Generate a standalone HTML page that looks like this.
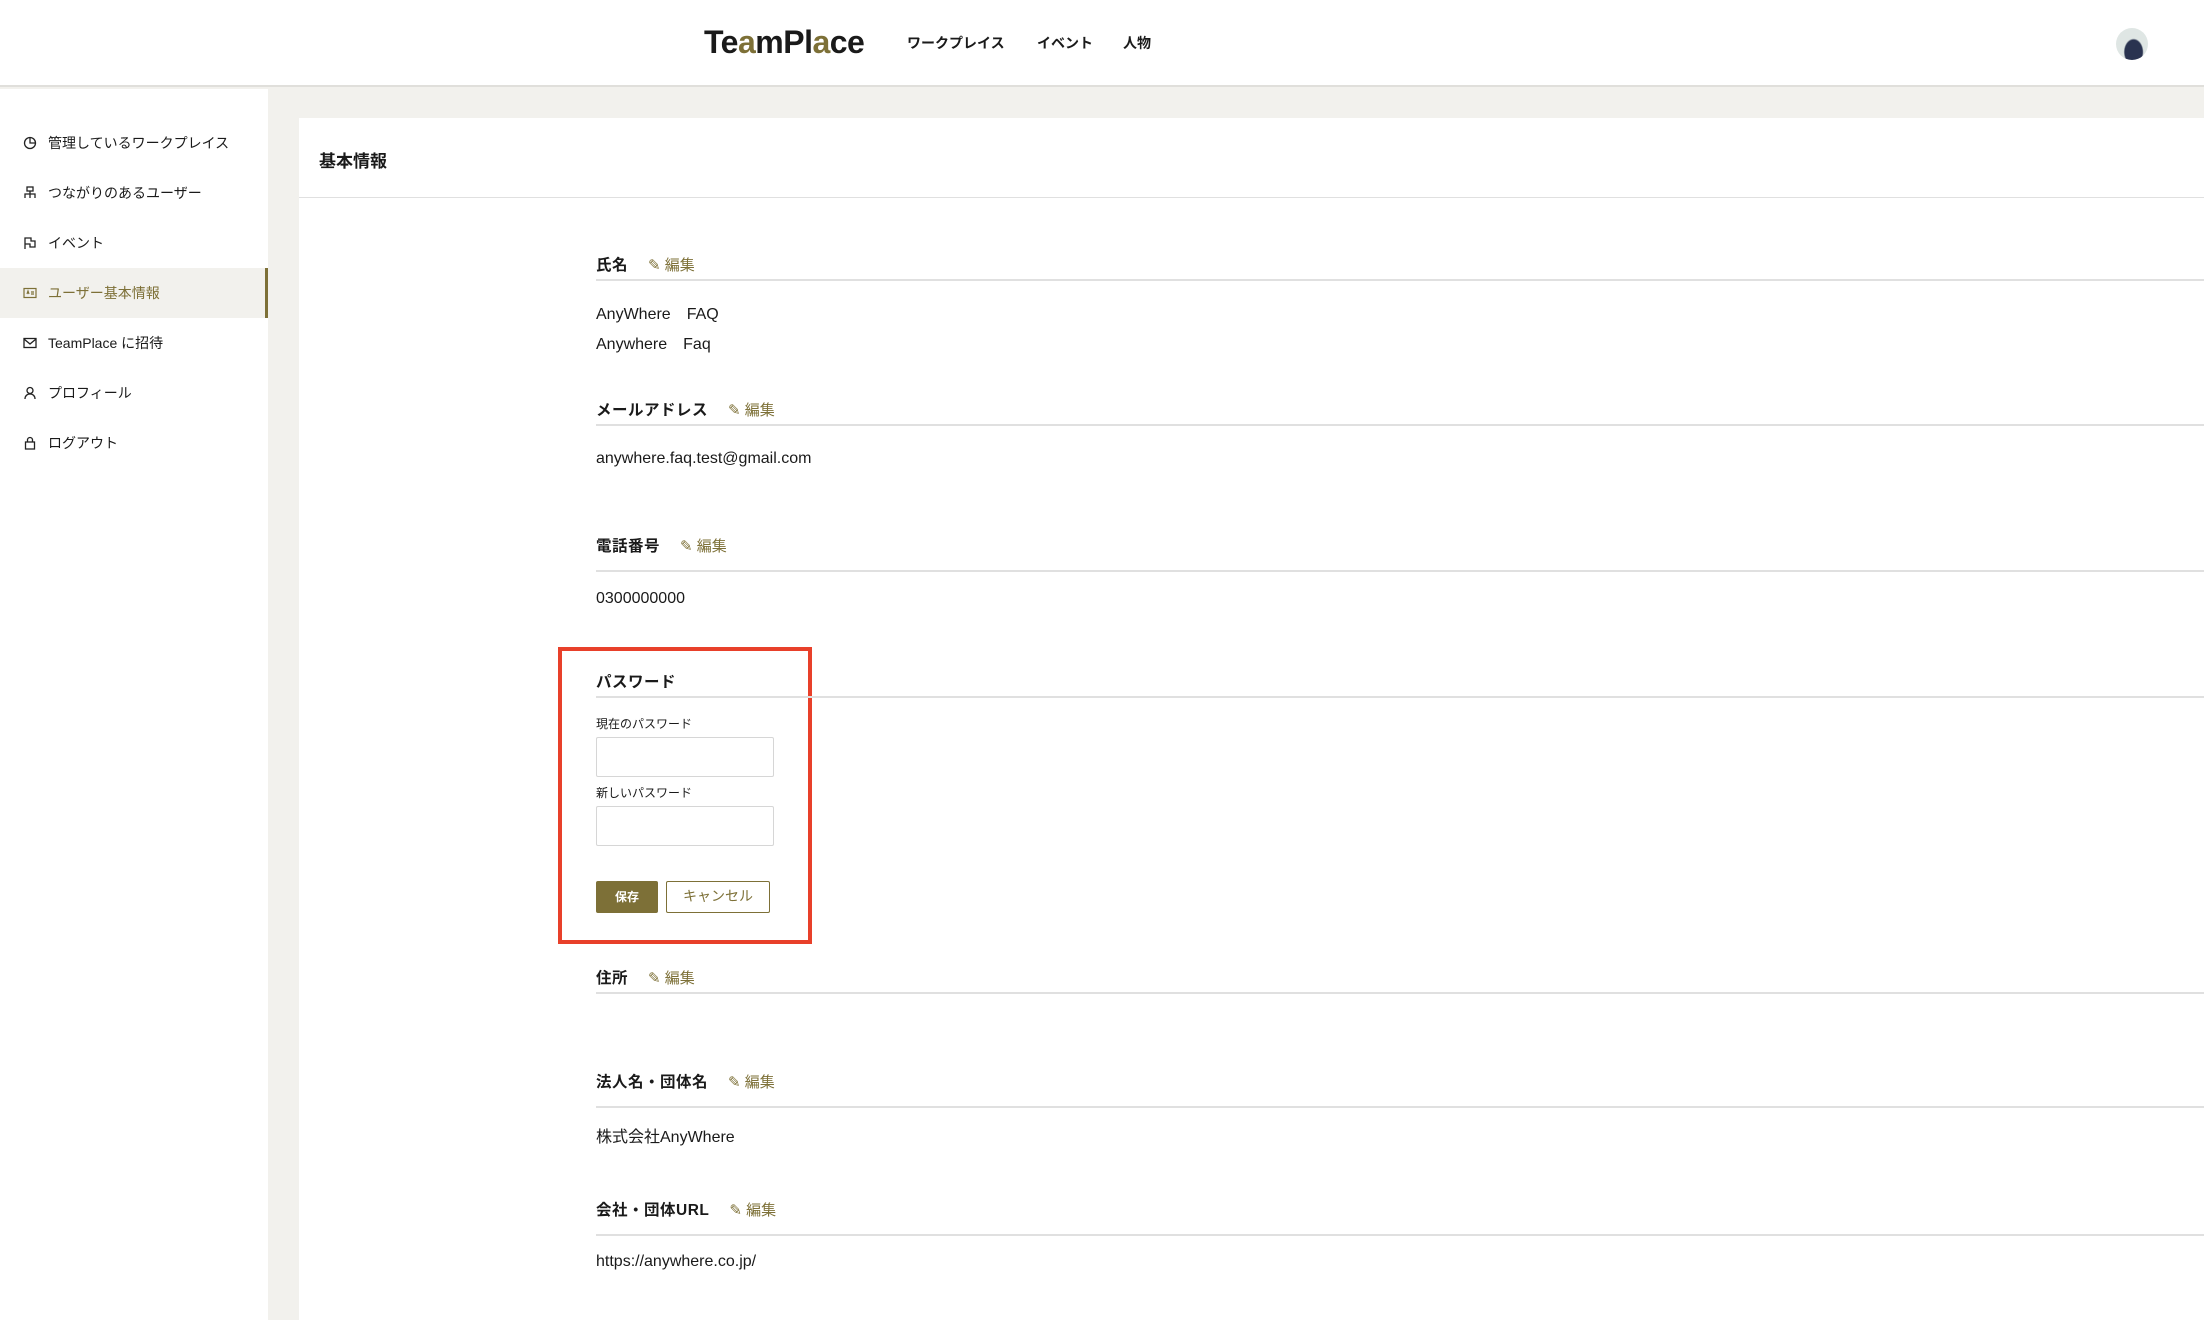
<!DOCTYPE html>
<html><head><meta charset="utf-8"><style>
*{margin:0;padding:0;box-sizing:border-box}
body{width:2204px;height:1320px;overflow:hidden;background:#f2f1ed;font-family:"Liberation Sans","Noto Sans CJK JP",sans-serif;color:#1a1a1a;position:relative}
.a{position:absolute;white-space:nowrap}
header{position:absolute;left:0;top:0;width:2204px;height:87px;background:#fff;border-bottom:2px solid #e0dfdb}
.logo{left:704px;top:24px;font-size:32px;font-weight:bold;letter-spacing:-0.5px;font-family:"Liberation Sans",sans-serif}
.logo span{color:#7d7037}
.nav{top:33px;font-size:14px;font-weight:bold}
.side{position:absolute;left:0;top:89px;width:268px;height:1231px;background:#fff}
.si{position:absolute;left:0;width:268px;height:50px;font-size:14px;line-height:50px;padding-left:48px}
.si svg{position:absolute;left:23px;top:18px}
.act{background:#f2f1ed;color:#7d7037;border-right:3px solid #7d7037}
.card{position:absolute;left:299px;top:118px;width:1905px;height:1202px;background:#fff}
.lab{font-size:15.5px;font-weight:bold;left:596px;letter-spacing:0.5px}
.ed{color:#7d7037;font-weight:normal;font-size:15px;margin-left:20px;letter-spacing:0}
.ln{position:absolute;left:596px;right:0;height:2px;background:#e0e0e0}
.v{left:596px;font-size:16px}
.sm{left:596px;font-size:12px}
.inp{position:absolute;left:596px;width:178px;height:40px;border:1px solid #d6d6d6;border-radius:2px;background:#fff}
</style></head><body>
<header>
<div class="a logo">Te<span>a</span>mPl<span>a</span>ce</div>
<div class="a nav" style="left:907px">ワークプレイス</div>
<div class="a nav" style="left:1037px">イベント</div>
<div class="a nav" style="left:1123px">人物</div>
<div class="a" style="left:2116px;top:28px;width:32px;height:32px;border-radius:50%;background:radial-gradient(ellipse at 55% 75%,#2a3350 0 35%,#dfe6e4 40% 100%)"></div>
</header>
<div class="side">
<div class="si" style="top:29px"><svg width="14" height="14" viewBox="0 0 14 14" fill="none" stroke="#222" stroke-width="1.3"><circle cx="7" cy="7" r="5.5"/><path d="M7 1.5V7H12.5"/></svg>管理しているワークプレイス</div>
<div class="si" style="top:79px"><svg width="14" height="14" viewBox="0 0 14 14" fill="none" stroke="#222" stroke-width="1.3"><rect x="4" y="1" width="6" height="4"/><path d="M2 12V8h10v4M7 5v7"/></svg>つながりのあるユーザー</div>
<div class="si" style="top:129px"><svg width="14" height="14" viewBox="0 0 14 14" fill="none" stroke="#222" stroke-width="1.3"><path d="M2 13V2h6v3h4v6H7V8H2"/></svg>イベント</div>
<div class="si act" style="top:179px"><svg width="14" height="14" viewBox="0 0 14 14" fill="none" stroke="#7d7037" stroke-width="1.2"><rect x="1" y="2.5" width="12" height="9"/><path d="M4 8l1-3 1 3M8 6h3M8 8h3"/></svg>ユーザー基本情報</div>
<div class="si" style="top:229px"><svg width="14" height="14" viewBox="0 0 14 14" fill="none" stroke="#222" stroke-width="1.3"><rect x="1" y="2.5" width="12" height="9"/><path d="M1 3l6 5 6-5"/></svg>TeamPlace に招待</div>
<div class="si" style="top:279px"><svg width="14" height="14" viewBox="0 0 14 14" fill="none" stroke="#222" stroke-width="1.3"><circle cx="7" cy="4.5" r="3"/><path d="M2 13c0-3 2-5 5-5s5 2 5 5"/></svg>プロフィール</div>
<div class="si" style="top:329px"><svg width="14" height="14" viewBox="0 0 14 14" fill="none" stroke="#222" stroke-width="1.3"><rect x="2.5" y="6" width="9" height="7"/><path d="M4.5 6V4a2.5 2.5 0 015 0v2"/></svg>ログアウト</div>
</div>
<div class="card"></div>
<div class="a" style="left:319px;top:147px;font-size:17px;font-weight:bold">基本情報</div>
<div class="ln" style="left:299px;top:197px;height:1px"></div>

<div class="a lab" style="top:253px">氏名<span class="ed">✎ 編集</span></div>
<div class="ln" style="top:279px"></div>
<div class="a v" style="top:300px">AnyWhere　FAQ</div>
<div class="a v" style="top:330px">Anywhere　Faq</div>

<div class="a lab" style="top:398px">メールアドレス<span class="ed">✎ 編集</span></div>
<div class="ln" style="top:424px"></div>
<div class="a v" style="top:450px">anywhere.faq.test@gmail.com</div>

<div class="a lab" style="top:534px">電話番号<span class="ed">✎ 編集</span></div>
<div class="ln" style="top:570px"></div>
<div class="a v" style="top:590px">0300000000</div>

<div class="a" style="left:558px;top:647px;width:254px;height:297px;border:4px solid #e8402a"></div>
<div class="a lab" style="top:670px">パスワード</div>
<div class="ln" style="top:696px;left:596px"></div>
<div class="a sm" style="top:715px">現在のパスワード</div>
<div class="inp" style="top:737px"></div>
<div class="a sm" style="top:784px">新しいパスワード</div>
<div class="inp" style="top:806px"></div>
<div class="a" style="left:596px;top:881px;width:62px;height:32px;background:#7d7037;border-radius:2px;color:#fff;font-size:12px;font-weight:bold;text-align:center;line-height:32px">保存</div>
<div class="a" style="left:666px;top:881px;width:104px;height:32px;border:1.5px solid #7d7037;border-radius:2px;color:#7d7037;font-size:14px;text-align:center;line-height:29px">キャンセル</div>

<div class="a lab" style="top:966px">住所<span class="ed">✎ 編集</span></div>
<div class="ln" style="top:992px"></div>

<div class="a lab" style="top:1070px">法人名・団体名<span class="ed">✎ 編集</span></div>
<div class="ln" style="top:1106px"></div>
<div class="a v" style="top:1123px">株式会社AnyWhere</div>

<div class="a lab" style="top:1198px">会社・団体URL<span class="ed">✎ 編集</span></div>
<div class="ln" style="top:1234px"></div>
<div class="a v" style="top:1253px">https://anywhere.co.jp/</div>
</body></html>
